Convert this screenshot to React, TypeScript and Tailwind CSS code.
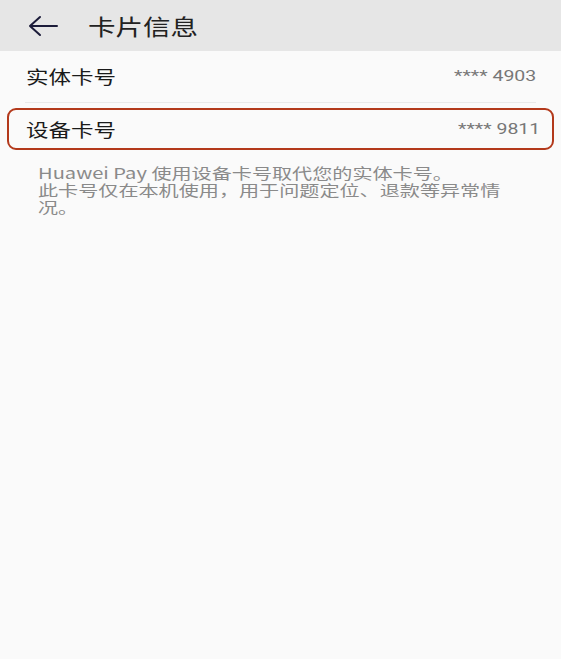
export default function App() {
  return (
    <div className="min-h-[659px] w-[561px] bg-[#fafafa] font-['Noto_Sans_CJK_SC','Noto_Sans',sans-serif]">
      {/* Header */}
      <div className="flex h-[51px] items-center bg-[#e6e6e6] pl-[28px]">
        <svg width="30" height="22" viewBox="0 0 30 22" fill="none" className="text-[#1c1c3a]">
          <path d="M12 2 L2 11 L12 20 M2 11 H29" stroke="currentColor" strokeWidth="2" strokeLinecap="round" strokeLinejoin="round" />
        </svg>
        <span className="ml-[30px] inline-block origin-left scale-x-125 text-[22px] text-[#222]">卡片信息</span>
      </div>

      {/* Physical card row */}
      <div className="mx-[25px] flex h-[52px] items-center justify-between border-b border-[#e9e9e9]">
        <span className="ml-px inline-block origin-left scale-x-125 text-[18px] text-[#1a1a1a]">实体卡号</span>
        <span className="inline-block origin-right scale-x-[1.3] text-[15px] text-[#777] font-['Roboto',sans-serif]">**** 4903</span>
      </div>

      {/* Device card row */}
      <div className="mx-[7px] mt-[5px] flex h-[42px] items-center justify-between rounded-[9px] border-2 border-[#b3391b] pl-[17px] pr-[12px]">
        <span className="inline-block origin-left scale-x-125 text-[18px] text-[#1a1a1a]">设备卡号</span>
        <span className="inline-block origin-right scale-x-[1.3] text-[15px] text-[#777] font-['Roboto',sans-serif]">**** 9811</span>
      </div>

      {/* Note */}
      <div className="ml-[38px] mt-[14px] whitespace-nowrap text-[15px] leading-[17px] text-[#8a8a8a]">
        <div className="h-[17px]"><span className="inline-block origin-left scale-x-[1.34]">Huawei Pay 使用设备卡号取代您的实体卡号。</span></div>
        <div className="h-[17px]"><span className="inline-block origin-left scale-x-[1.34]">此卡号仅在本机使用，用于问题定位、退款等异常情</span></div>
        <div className="h-[17px]"><span className="inline-block origin-left scale-x-[1.34]">况。</span></div>
      </div>
    </div>
  )
}
